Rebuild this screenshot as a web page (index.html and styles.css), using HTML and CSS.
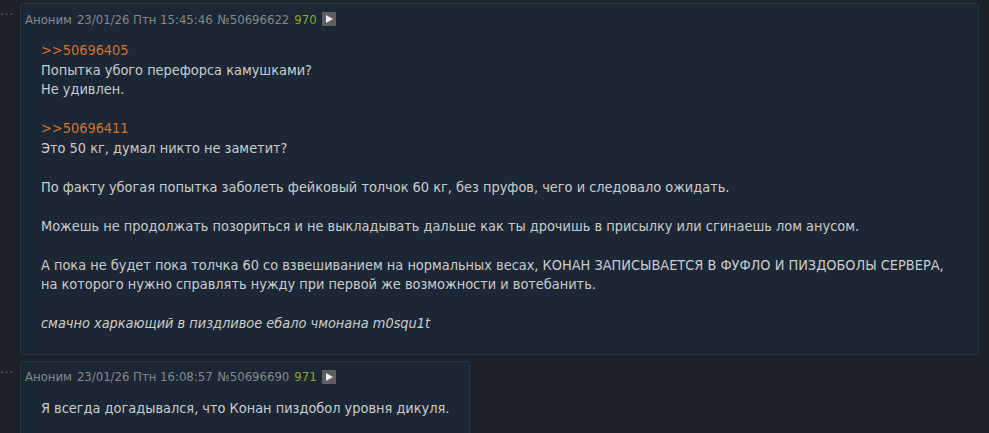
FILE: index.html
```html
<!DOCTYPE html>
<html lang="ru">
<head>
    <meta charset="UTF-8">
    <title>Тред</title>
    <link rel="stylesheet" href="styles.css">
</head>
<body>
    <div class="thread">
        <div class="row">
            <span class="dots">···</span>
            <div class="post">
                <div class="details">
                    <span class="name">Аноним</span>
                    <span class="time">23/01/26 Птн 15:45:46</span>
                    <span class="num">№50696622</span>
                    <span class="count">970</span>
                    <span class="play"></span>
                </div>
                <div class="message">
                    <a class="reply" href="#">&gt;&gt;50696405</a><br>
                    Попытка убого перефорса камушками?<br>
                    Не удивлен.<br>
                    <br>
                    <a class="reply" href="#">&gt;&gt;50696411</a><br>
                    Это 50 кг, думал никто не заметит?<br>
                    <br>
                    По факту убогая попытка заболеть фейковый толчок 60 кг, без пруфов, чего и следовало ожидать.<br>
                    <br>
                    Можешь не продолжать позориться и не выкладывать дальше как ты дрочишь в присылку или сгинаешь лом анусом.<br>
                    <br>
                    А пока не будет пока толчка 60 со взвешиванием на нормальных весах, КОНАН ЗАПИСЫВАЕТСЯ В ФУФЛО И ПИЗДОБОЛЫ СЕРВЕРА, на которого нужно справлять нужду при первой же возможности и вотебанить.<br>
                    <br>
                    <em>смачно харкающий в пиздливое ебало чмонана m0squ1t</em>
                </div>
            </div>
        </div>
        <div class="row">
            <span class="dots">···</span>
            <div class="post">
                <div class="details">
                    <span class="name">Аноним</span>
                    <span class="time">23/01/26 Птн 16:08:57</span>
                    <span class="num">№50696690</span>
                    <span class="count">971</span>
                    <span class="play"></span>
                </div>
                <div class="message">
                    Я всегда догадывался, что Конан пиздобол уровня дикуля.
                </div>
            </div>
        </div>
    </div>
</body>
</html>
```

FILE: styles.css
```css
html, body {
    margin: 0;
    padding: 0;
    background-color: #1c2228;
    color: #ccc;
    font-family: "DejaVu Sans Condensed", "DejaVu Sans", sans-serif;
    font-size: 14px;
    overflow: hidden;
}
.thread {
    padding: 3px 10px 0 0;
}
.row {
    display: flex;
    align-items: flex-start;
    margin-bottom: 6px;
}
.dots {
    width: 20px;
    flex-shrink: 0;
    color: #666;
    font-size: 13px;
    line-height: 14px;
    padding-top: 5px;
    letter-spacing: 1px;
}
.post {
    background: #1b2734;
    border: 1px solid #2a3644;
    border-radius: 3px;
    min-width: 0;
}
.details {
    padding: 6px 4px 0 4px;
    font-size: 13px;
    color: #888;
    display: flex;
    align-items: center;
    gap: 5px;
    height: 18px;
}
.count {
    color: #8aab1b;
}
.play {
    width: 14px;
    height: 14px;
    background: #5e5e5e;
    position: relative;
}
.play::after {
    content: "";
    position: absolute;
    left: 4px;
    top: 3px;
    border-left: 7px solid #eee;
    border-top: 4px solid transparent;
    border-bottom: 4px solid transparent;
}
.message {
    padding: 13px 20px 20px 20px;
    font-size: 14.4px;
    line-height: 19.5px;
}
.reply {
    color: #d4712e;
    text-decoration: none;
}
em {
    font-style: italic;
}
```
